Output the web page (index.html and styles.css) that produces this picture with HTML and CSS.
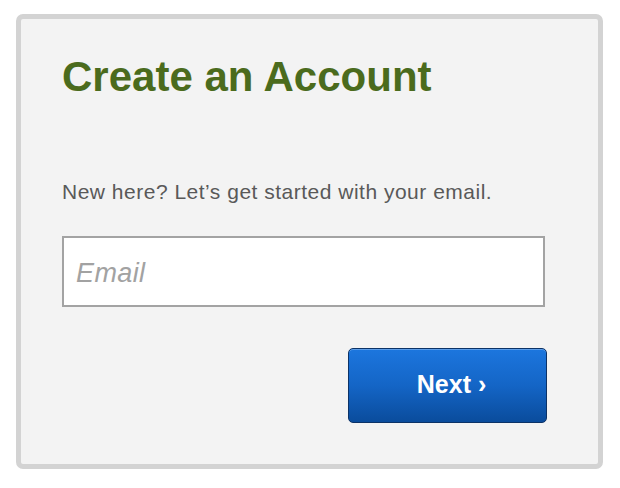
FILE: index.html
```html
<!DOCTYPE html>
<html lang="en">
<head>
<meta charset="utf-8">
<title>Create an Account</title>
<link rel="stylesheet" href="styles.css">
</head>
<body>
<div class="card">
  <h1 class="title">Create an Account</h1>
  <p class="intro">New here? Let’s get started with your email.</p>
  <input class="email" type="email" placeholder="Email">
  <div class="actions">
    <button class="next" type="button">Next ›</button>
  </div>
</div>
</body>
</html>
```

FILE: styles.css
```css
html, body {
  margin: 0;
  padding: 0;
  background: #ffffff;
}

body {
  padding: 14px 0 0 16px;
  font-family: "Liberation Sans", Arial, Helvetica, sans-serif;
}

.card {
  box-sizing: border-box;
  width: 587px;
  height: 455px;
  background: #f3f3f3;
  border: 5px solid #d3d3d3;
  border-radius: 7px;
  padding: 34px 51px 0 41px;
  display: flex;
  flex-direction: column;
}

.title {
  margin: 0;
  font-size: 42px;
  line-height: 48px;
  font-weight: bold;
  color: #4b6b1d;
}

.intro {
  margin: 79px 0 0;
  font-size: 21px;
  line-height: 24px;
  letter-spacing: 0.5px;
  color: #595959;
}

.email {
  box-sizing: border-box;
  margin: 32px 0 0;
  width: 483px;
  height: 71px;
  padding: 4px 12px 0;
  border: 2px solid #a3a3a3;
  border-radius: 0;
  background: #ffffff;
  font-family: "Liberation Sans", Arial, Helvetica, sans-serif;
  font-size: 27px;
  font-style: italic;
  letter-spacing: 0.4px;
  color: #333333;
  outline: none;
}

.email::placeholder {
  color: #a2a2a2;
  opacity: 1;
}

.actions {
  display: flex;
  justify-content: flex-end;
  margin-top: 41px;
}

.next {
  box-sizing: border-box;
  width: 199px;
  height: 75px;
  border: 1px solid #0c3266;
  border-radius: 5px;
  background: linear-gradient(to bottom, #1c76de 0%, #1465c6 50%, #0a4c9c 100%);
  box-shadow: inset 0 1px 0 #5c9de8;
  color: #ffffff;
  font-family: "Liberation Sans", Arial, Helvetica, sans-serif;
  font-size: 25px;
  font-weight: bold;
  padding: 0 0 2px 8px;
  cursor: pointer;
}
```
